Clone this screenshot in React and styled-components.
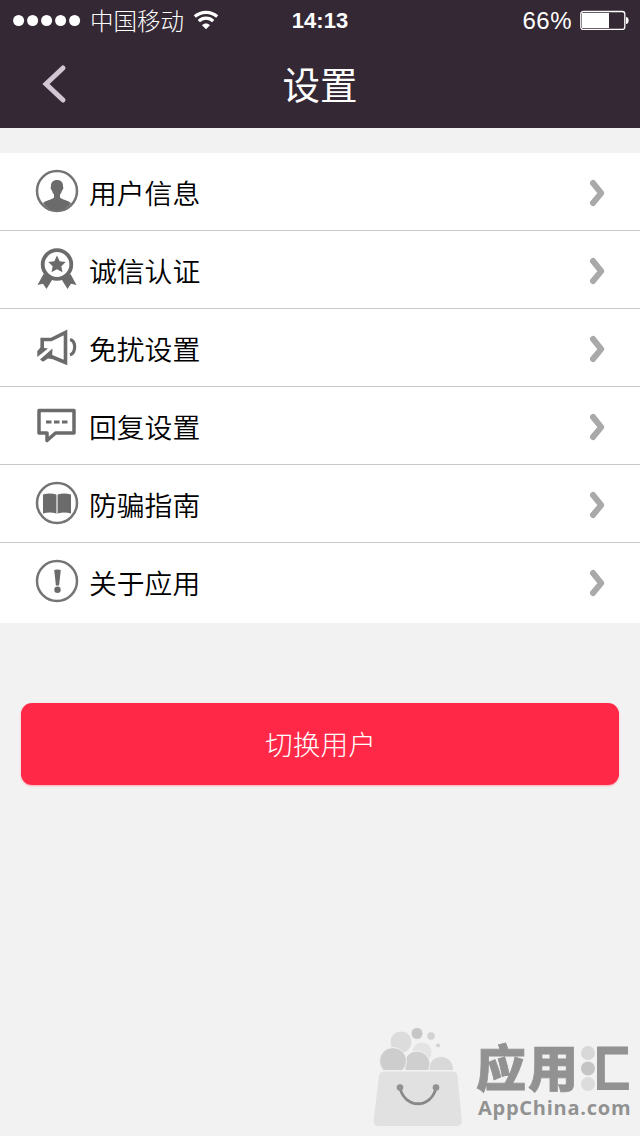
import styled, { createGlobalStyle } from 'styled-components';

const GlobalStyle = createGlobalStyle`
  * {
    box-sizing: border-box;
  }

  body {
    margin: 0;
    background: #f2f2f2;
    font-family: "Liberation Sans", "Noto Sans CJK SC", sans-serif;
  }
`;

const Screen = styled.div`
  display: flex;
  flex-direction: column;
  width: 640px;
  height: 1136px;
  overflow: hidden;
  background: #f2f2f2;
`;

const TopBar = styled.header`
  height: 128px;
  background: #332833;
  color: #fff;
`;

const StatusBar = styled.div`
  display: grid;
  grid-template-columns: 1fr auto 1fr;
  align-items: center;
  height: 40px;
  padding: 0 11px 0 13px;
`;

const StatusGroup = styled.div`
  display: flex;
  align-items: center;
  justify-content: ${props => (props.$end ? 'flex-end' : 'flex-start')};
`;

const Carrier = styled.span`
  margin: 0 9px 0 9px;
  font-family: "Noto Sans CJK SC", sans-serif;
  font-size: 23.5px;
  font-weight: 300;
  line-height: 40px;
`;

const Time = styled.span`
  padding-top: 2px;
  margin-right: 2px;
  font-size: 22px;
  font-weight: 700;
  line-height: 38px;
`;

const Percent = styled.span`
  margin-right: 8px;
  padding-top: 2px;
  font-size: 24px;
  letter-spacing: 0.5px;
  line-height: 38px;
`;

const NavBar = styled.div`
  display: grid;
  grid-template-columns: 100px 1fr 100px;
  align-items: center;
  height: 88px;
`;

const BackButton = styled.button`
  display: flex;
  padding: 0 0 0 41px;
  border: none;
  background: none;
`;

const Title = styled.h1`
  margin: 0;
  font-family: "Noto Sans CJK SC", sans-serif;
  font-size: 37.5px;
  font-weight: 400;
  line-height: 86px;
  padding-bottom: 2px;
  text-align: center;
`;

const List = styled.ul`
  margin: 25px 0 0;
  padding: 0 0 2px;
  list-style: none;
  background: #fff;
`;

const Row = styled.li`
  display: flex;
  align-items: center;
  height: 78px;
  padding: 0 32px 0 35px;
  border-bottom: 1px solid #c8c8c8;

  &:last-child {
    border-bottom-color: transparent;
  }
`;

const RowIcon = styled.svg`
  width: 44px;
  height: 44px;
  margin-bottom: 1px;
  flex: none;
`;

const Label = styled.span`
  flex: 1;
  margin-left: 10px;
  font-family: "Noto Sans CJK SC", sans-serif;
  font-size: 27.8px;
  font-weight: 350;
  line-height: 60px;
  color: #000;
`;

const SwitchButton = styled.button`
  height: 82px;
  margin: 80px 21px 0;
  padding: 0 0 2px 1px;
  border: none;
  border-radius: 11px;
  background: #ff2947;
  box-shadow: 0 1px 2px rgba(255, 41, 71, 0.35);
  color: #fff;
  font-family: "Noto Sans CJK SC", sans-serif;
  font-size: 27.7px;
  font-weight: 300;
`;

const Footer = styled.footer`
  display: flex;
  justify-content: flex-end;
  margin-top: auto;
  height: 112px;
  padding-right: 8px;
`;

const Brand = styled.div`
  width: 156px;
  margin-left: 13px;
  color: #929292;
`;

const BrandName = styled.div`
  display: flex;
  height: 50px;
  margin-top: 16px;
  font-family: "Noto Sans CJK SC", sans-serif;
  font-size: 50px;
  font-weight: 900;
  letter-spacing: 2px;
  line-height: 50px;
  -webkit-text-stroke: 0.8px #929292;
`;

const DottedGlyph = styled.span`
  position: relative;
`;

const ClippedGlyph = styled.span`
  display: block;
  clip-path: inset(0 0 0 17px);
`;

const Dots = styled.svg`
  position: absolute;
  top: 3px;
  left: 0;
`;

const BrandUrl = styled.div`
  margin: 5px 0 0 2px;
  font-family: "Open Sans", sans-serif;
  font-size: 20px;
  font-weight: 700;
  letter-spacing: 0.75px;
  line-height: 26px;
`;

const UserIcon = () => (
  <>
    <circle cx="22" cy="22" r="20" fill="none" stroke="#747474" strokeWidth="2.5" />
    <path d="M22 11c-4 0-6.3 2.5-6 6.5-.8.8-.2 3.5 1 4 .4 2 1.200 3 2 4v3c-1.500 2-8.500 3-11 5.500C11.500 39 16 41.500 22 41.500S32.500 39 36 34c-2.500-2.500-9.500-3.500-11-5.500v-3c.8-1 1.600-2 2-4 1.200-.5 1.800-3.200 1-4 .3-4-2-6.500-6-6.500z" fill="#6b6b6b" />
  </>
);

const BadgeIcon = () => (
  <>
    <path d="M8.500 27 2.500 38l5.500-1.200L11.500 42 18 31.500zM35.500 27l6 11-5.500-1.200L32.500 42 26 31.500z" fill="#6b6b6b" />
    <circle cx="22" cy="17.500" r="14.300" fill="#fff" stroke="#6b6b6b" strokeWidth="3.800" />
    <path d="m22 8.500 2.700 5.800 6 .7-4.400 4.200 1.200 6-5.500-3-5.500 3 1.200-6-4.400-4.200 6-.7z" fill="#6b6b6b" />
  </>
);

const HornIcon = () => (
  <>
    <path d="M7.200 24v-9.500h9L30.500 7.500v30L16 31.500" fill="none" stroke="#6b6b6b" strokeWidth="3.600" />
    <path d="M5.500 22.500 2.300 26v6L13 23.500zM17.500 23.500 5 34.500l3 2.200 5-3.200 4 .5z" fill="#6b6b6b" />
    <path d="M35 14.500c6.200 1.500 6.200 13.500 0 15.500" fill="none" stroke="#6b6b6b" strokeWidth="3.200" />
  </>
);

const ChatIcon = () => (
  <>
    <path d="M4 7.500h35v22.500H20.500l-8.500 7.500v-7.500H4z" fill="none" stroke="#6b6b6b" strokeWidth="3.500" strokeLinejoin="round" />
    <path d="M11 19h5.500M19 19h5.500M27 19h5.500" fill="none" stroke="#6b6b6b" strokeWidth="3" />
  </>
);

const BookIcon = () => (
  <>
    <circle cx="22" cy="22" r="20" fill="none" stroke="#747474" strokeWidth="2.500" />
    <path d="M8 13.500c4.500-1.500 9-1.500 13.300 0v19c-4.300-1.500-8.800-1.500-13.300 0zM22.700 13.500c4.300-1.500 8.800-1.500 13.300 0v19c-4.500-1.500-9-1.500-13.300 0z" fill="#6b6b6b" />
    <path d="M21.300 14h1.400v18.500h-1.400z" fill="#b5b5b5" />
  </>
);

const AboutIcon = () => (
  <>
    <circle cx="22" cy="22" r="20" fill="none" stroke="#747474" strokeWidth="2.500" />
    <path d="M19.200 11q3.300-1.200 6.600 0l-1.700 15.500h-3.200z" fill="#6b6b6b" />
    <circle cx="22.500" cy="30.800" r="3.200" fill="#6b6b6b" />
  </>
);

const Chevron = () => (
  <svg width="20" height="30" viewBox="0 0 20 30">
    <path d="M5 6l8.200 10.100L5 26" fill="none" stroke="#a9a9a9" strokeWidth="6" strokeLinecap="round" strokeLinejoin="round" />
  </svg>
);

const Wifi = () => (
  <svg width="26" height="20" viewBox="0 0 26 20" fill="none" stroke="#fff">
    <path d="M1.800 6.500c6.500-5.600 15.900-5.600 22.400 0" strokeWidth="3.200" />
    <path d="M5.800 11.200c4-4 10.400-4 14.400 0" strokeWidth="3.200" />
    <path d="M9 15.200c2.200-2.200 5.800-2.200 8 0l-4 4z" fill="#fff" stroke="none" />
  </svg>
);

const Signal = () => (
  <svg width="68" height="12" viewBox="0 0 68 12" fill="#fff">
    {[0, 1, 2, 3, 4].map(index => (
      <circle key={index} cx={5.6 + index * 14} cy="6.5" r="5.500" />
    ))}
  </svg>
);

const Battery = () => (
  <svg width="49" height="20" viewBox="0 0 49 20">
    <rect x="0.800" y="1.500" width="44" height="18" rx="2.500" fill="none" stroke="#fff" strokeWidth="1.300" />
    <rect x="2" y="3" width="27" height="15" fill="#fff" />
    <path d="M46 7c3.500 0 3.500 7 0 7z" fill="#fff" />
  </svg>
);

const Bag = () => (
  <svg width="90" height="104" viewBox="0 0 90 104">
    <g stroke="#f2f2f2" strokeWidth="1">
      <circle cx="49" cy="28" r="10" fill="#e4e4e4" />
      <circle cx="28" cy="18" r="11" fill="#dcdcdc" />
      <circle cx="68" cy="45" r="12.500" fill="#d8d8d8" />
      <circle cx="44" cy="40" r="13" fill="#cfcfcf" />
      <circle cx="20" cy="37" r="13.500" fill="#cdcdcd" />
      <circle cx="44" cy="9.500" r="6" fill="#c6c6c6" />
      <circle cx="58" cy="12" r="4.300" fill="#d2d2d2" />
      <circle cx="65" cy="21.500" r="2.500" fill="#d2d2d2" />
    </g>
    <path d="M6 46h78v10H6z" fill="#f2f2f2" />
    <path d="M11 47.500h68.500q4.500 0 5 4.500l4.300 44.500q0 5.500-5.500 5.500H6q-5.500 0-5.300-5.500L6 52q.5-4.500 5-4.500z" fill="#e1e1e1" />
    <path d="M27 64c5 21 31 21 36 0" fill="none" stroke="#888" strokeWidth="2.800" />
    <circle cx="27" cy="63.500" r="3.300" fill="#929292" />
    <circle cx="63" cy="63.500" r="3.300" fill="#929292" />
  </svg>
);

const items = [
  { label: '用户信息', icon: <UserIcon /> },
  { label: '诚信认证', icon: <BadgeIcon /> },
  { label: '免扰设置', icon: <HornIcon /> },
  { label: '回复设置', icon: <ChatIcon /> },
  { label: '防骗指南', icon: <BookIcon /> },
  { label: '关于应用', icon: <AboutIcon /> },
];

const App = () => (
  <>
    <GlobalStyle />
    <Screen>
      <TopBar>
        <StatusBar>
          <StatusGroup>
            <Signal />
            <Carrier>中国移动</Carrier>
            <Wifi />
          </StatusGroup>
          <Time>14:13</Time>
          <StatusGroup $end>
            <Percent>66%</Percent>
            <Battery />
          </StatusGroup>
        </StatusBar>
        <NavBar>
          <BackButton>
            <svg width="28" height="40" viewBox="0 0 28 40">
              <path d="M22 4 5 20l17 16" fill="none" stroke="#d3c6d4" strokeWidth="5" strokeLinecap="round" />
            </svg>
          </BackButton>
          <Title>设置</Title>
        </NavBar>
      </TopBar>
      <List>
        {items.map(({ label, icon }) => (
          <Row key={label}>
            <RowIcon viewBox="0 0 44 44">{icon}</RowIcon>
            <Label>{label}</Label>
            <Chevron />
          </Row>
        ))}
      </List>
      <SwitchButton>切换用户</SwitchButton>
      <Footer>
        <Bag />
        <Brand>
          <BrandName>
            应用
            <DottedGlyph>
              <ClippedGlyph>汇</ClippedGlyph>
              <Dots width="18" height="50" viewBox="0 0 18 50">
                <circle cx="8" cy="10" r="7" fill="#d8d8d8" />
                <circle cx="8" cy="25.500" r="7" fill="#c4c4c4" />
                <circle cx="8" cy="41" r="7" fill="#dcdcdc" />
              </Dots>
            </DottedGlyph>
          </BrandName>
          <BrandUrl>AppChina.com</BrandUrl>
        </Brand>
      </Footer>
    </Screen>
  </>
);

export default App;
